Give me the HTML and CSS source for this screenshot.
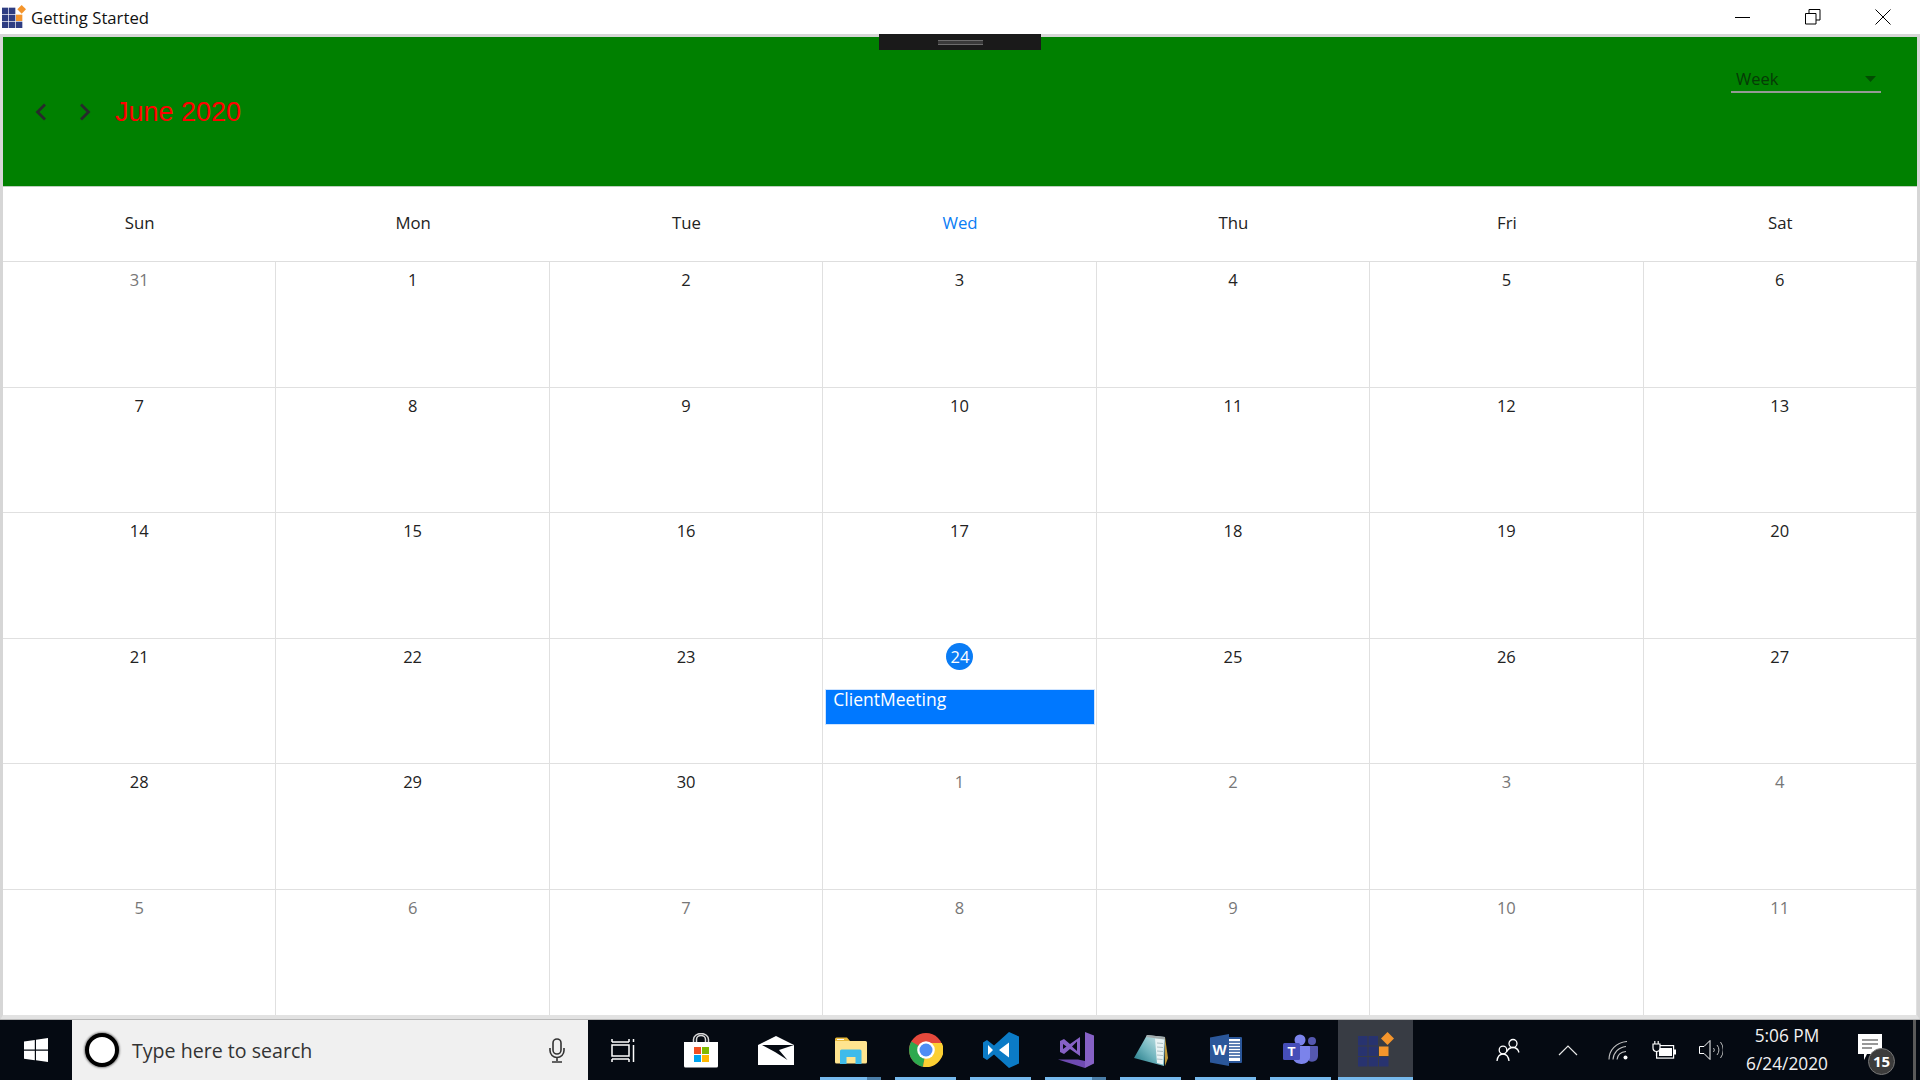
FILE: index.html
```html
<!DOCTYPE html>
<html lang="en">
<head>
<meta charset="utf-8">
<title>Getting Started</title>
<link rel="stylesheet" href="styles.css">
</head>
<body>
<svg class="defs" width="0" height="0" aria-hidden="true">
  <defs>
    <linearGradient id="padgrad" x1="0" y1="1" x2="1" y2="0">
      <stop offset="0" stop-color="#17707f"/>
      <stop offset="0.45" stop-color="#6fb4bd"/>
      <stop offset="1" stop-color="#d9eef0"/>
    </linearGradient>
  </defs>
  <symbol id="appicon" viewBox="0 0 36 36">
    <g fill="currentColor">
      <rect x="0" y="4" width="9.5" height="9.5"/><rect x="10.5" y="4" width="9.5" height="9.5"/>
      <rect x="0" y="14.5" width="9.5" height="9.5"/><rect x="10.5" y="14.5" width="9.5" height="9.5"/>
      <rect x="0" y="25" width="9.5" height="9.5"/><rect x="10.5" y="25" width="9.5" height="9.5"/><rect x="21" y="25" width="9.5" height="9.5"/>
    </g>
    <rect x="21" y="14.5" width="9.5" height="9.5" fill="#f4952c"/>
    <path d="M29.5 0l6.5 6.5-6.5 6.5-6.5-6.5z" fill="#f4952c"/>
  </symbol>
</svg>
<div class="screen">
  <header class="titlebar">
    <svg class="title-icon"><use href="#appicon"/></svg>
    <span class="title-text">Getting Started</span>
    <div class="winbtns">
      <div class="winbtn"><svg width="16" height="16" viewBox="0 0 16 16"><path d="M0 8.500h15" stroke="#000" fill="none"/></svg></div>
      <div class="winbtn"><svg width="16" height="16" viewBox="0 0 16 16"><path d="M.5 4.500h10.500v10.500H.5zM4 4.500V.5h11v10.500h-4" stroke="#000" fill="none"/></svg></div>
      <div class="winbtn"><svg width="16" height="16" viewBox="0 0 16 16"><path d="M.5.5l15 15M15.500.5l-15 15" stroke="#000" fill="none"/></svg></div>
    </div>
  </header>

  <main class="window">
    <div class="grip"><span class="grip-lines"></span></div>
    <section class="cal-head">
      <svg class="nav" width="12" height="18" viewBox="0 0 12 18"><path d="M10 1.500L2.500 9l7.500 7.500" fill="none" stroke="#262b2b" stroke-width="2.800"/></svg>
      <svg class="nav nav-next" width="12" height="18" viewBox="0 0 12 18"><path d="M2 1.500L9.500 9 2 16.500" fill="none" stroke="#262b2b" stroke-width="2.800"/></svg>
      <h1 class="month">June 2020</h1>
      <div class="view-select">
        <span class="view-label">Week</span>
        <svg width="11" height="6" viewBox="0 0 11 6"><path d="M0 0h11L5.500 6z" fill="#024d02"/></svg>
      </div>
    </section>

    <div class="dow">
      <div>Sun</div><div>Mon</div><div>Tue</div><div class="dow-today">Wed</div><div>Thu</div><div>Fri</div><div>Sat</div>
    </div>

    <div class="month-grid">
      <div class="cell muted"><span class="num">31</span></div><div class="cell"><span class="num">1</span></div><div class="cell"><span class="num">2</span></div><div class="cell"><span class="num">3</span></div><div class="cell"><span class="num">4</span></div><div class="cell"><span class="num">5</span></div><div class="cell"><span class="num">6</span></div>
      <div class="cell"><span class="num">7</span></div><div class="cell"><span class="num">8</span></div><div class="cell"><span class="num">9</span></div><div class="cell"><span class="num">10</span></div><div class="cell"><span class="num">11</span></div><div class="cell"><span class="num">12</span></div><div class="cell"><span class="num">13</span></div>
      <div class="cell"><span class="num">14</span></div><div class="cell"><span class="num">15</span></div><div class="cell"><span class="num">16</span></div><div class="cell"><span class="num">17</span></div><div class="cell"><span class="num">18</span></div><div class="cell"><span class="num">19</span></div><div class="cell"><span class="num">20</span></div>
      <div class="cell"><span class="num">21</span></div><div class="cell"><span class="num">22</span></div><div class="cell"><span class="num">23</span></div><div class="cell"><span class="num today">24</span><div class="event">ClientMeeting</div></div><div class="cell"><span class="num">25</span></div><div class="cell"><span class="num">26</span></div><div class="cell"><span class="num">27</span></div>
      <div class="cell"><span class="num">28</span></div><div class="cell"><span class="num">29</span></div><div class="cell"><span class="num">30</span></div><div class="cell muted"><span class="num">1</span></div><div class="cell muted"><span class="num">2</span></div><div class="cell muted"><span class="num">3</span></div><div class="cell muted"><span class="num">4</span></div>
      <div class="cell muted"><span class="num">5</span></div><div class="cell muted"><span class="num">6</span></div><div class="cell muted"><span class="num">7</span></div><div class="cell muted"><span class="num">8</span></div><div class="cell muted"><span class="num">9</span></div><div class="cell muted"><span class="num">10</span></div><div class="cell muted"><span class="num">11</span></div>
    </div>
  </main>

  <footer class="taskbar">
    <div class="start">
      <svg width="24" height="24" viewBox="0 0 24 24"><path d="M0 3.400l10.800-1.500v9.600H0zM12 1.700L24 0v11.500H12zM0 12.700h10.800v9.500L0 20.700zM12 12.700h12V24l-12-1.700z" fill="#fff"/></svg>
    </div>
    <div class="search">
      <span class="cortana"></span>
      <span class="search-text">Type here to search</span>
      <svg class="mic" width="18" height="25" viewBox="0 0 18 25"><rect x="5" y="1" width="8" height="15" rx="4" fill="none" stroke="#333" stroke-width="1.600"/><path d="M2 10v2.500a7 7 0 0 0 14 0V10M9 19.500v3.500M4 24h10" fill="none" stroke="#333" stroke-width="1.600"/></svg>
    </div>
    <div class="slots">
      <div class="slot slot-tasks">
        <svg width="24" height="24" viewBox="0 0 24 24"><rect x="1" y="7" width="17" height="11" fill="none" stroke="#fff" stroke-width="1.500"/><path d="M1 4h17M1 1v3M18 1v3M1 21h17M1 21v3M18 21v3M22.500 1v3M22.500 7v17" fill="none" stroke="#fff" stroke-width="1.500"/></svg>
      </div>
      <div class="slot">
        <svg width="36" height="35" viewBox="0 0 36 35"><path d="M10.500 9V6.500a7.500 6 0 0 1 15 0V9M13.500 9V6.500a4.500 4 0 0 1 9 0V9" fill="none" stroke="#d8d8d8" stroke-width="1.500"/><path d="M1 9h34v24a1.500 1.500 0 0 1-1.500 1.500h-31A1.500 1.500 0 0 1 1 33z" fill="#fff"/><rect x="11" y="14" width="7" height="7" fill="#f25022"/><rect x="19" y="14" width="7" height="7" fill="#7fba00"/><rect x="11" y="22" width="7" height="7" fill="#00a4ef"/><rect x="19" y="22" width="7" height="7" fill="#ffb900"/></svg>
      </div>
      <div class="slot">
        <svg width="36" height="29" viewBox="0 0 36 29"><path d="M0 9L18 0l18 9v20H0z" fill="#fff"/><path d="M4 9h32L21 14l8.500 10L17 16z" fill="#050a12"/></svg>
      </div>
      <div class="slot running split">
        <svg width="32" height="27" viewBox="0 0 32 27"><path d="M0 2a1.500 1.500 0 0 1 1.500-1.500H12l3 3.500H0z" fill="#e9b93b"/><path d="M0 4h30.500a1.500 1.500 0 0 1 1.500 1.500V25a1.500 1.500 0 0 1-1.500 1.500H1.500A1.500 1.500 0 0 1 0 25z" fill="#ffe48f"/><path d="M5 27v-13a1.500 1.500 0 0 1 1.500-1.500H25a1.500 1.500 0 0 1 1.500 1.500v13h-6v-7h-9v7z" fill="#3fbbea"/><path d="M2 2.500h7" stroke="#fff" stroke-width="1"/></svg>
      </div>
      <div class="slot running">
        <svg width="34" height="34" viewBox="0 0 34 34"><circle cx="17" cy="17" r="17" fill="#e5493c"/><path d="M17 17L2.300 8.500A17 17 0 0 0 14 33.700z" fill="#2da94f"/><path d="M17 10h15.800A17 17 0 0 1 14 33.700L17 17z" fill="#fcd033"/><circle cx="17" cy="17" r="8.800" fill="#fff"/><circle cx="17" cy="17" r="6.500" fill="#4f8df5"/></svg>
      </div>
      <div class="slot running">
        <svg width="36" height="36" viewBox="0 0 36 36"><path d="M26 0l10 4.500v27L26 36 11 22.500 4 28l-4-2.500v-15L4 8l7 5.500z" fill="#0b7bc6"/><path d="M26 10.500L16 18l10 7.500zM5 13v10l5-5z" fill="#fff"/></svg>
      </div>
      <div class="slot running split">
        <svg width="36" height="36" viewBox="0 0 36 36"><path d="M27 0l9 3.500v28L27 36z" fill="#8661c5"/><path d="M0 27.500h20l7 1.500v7z" fill="#6f4bb2"/><path d="M2 9l4-2 6 5 10-7v19l-10-7-6 5-4-2zM5 12v5l3.500-2.500zM19 9.500l-5 5 5 4.500z" fill="#8661c5" fill-rule="evenodd"/></svg>
      </div>
      <div class="slot running">
        <svg width="34" height="32" viewBox="0 0 34 32"><path d="M31 3l3 21-3 8z" fill="#c19a3a"/><path d="M0 24L13 1l18 2-1 29z" fill="url(#padgrad)"/><path d="M21 4.500l9 1-1 25-6-1.500z" fill="#e9f3f4"/><path d="M23 9l6 .5M23 13l6 .5M23 17l6 .5M23 21l6 .5M23 25l5.500.5" stroke="#9db4b8" stroke-width=".8"/><path d="M13 1l18 2v2.500L12 3z" fill="#a3abac"/></svg>
      </div>
      <div class="slot running">
        <svg width="32" height="32" viewBox="0 0 32 32"><rect x="14" y="3" width="18" height="26" rx="1" fill="#2b579a"/><rect x="19" y="5" width="11" height="22" fill="#fff"/><path d="M19 8h11M19 11h11M19 14h11M19 17h11M19 20h11M19 23h11" stroke="#2b579a" stroke-width="1.300"/><path d="M19 0v32L0 28.500v-25z" fill="#2b579a"/><text x="9.500" y="21" class="word-w">W</text></svg>
      </div>
      <div class="slot running">
        <svg width="35" height="32" viewBox="0 0 35 32"><circle cx="17" cy="6" r="5.500" fill="#7b83eb"/><circle cx="29" cy="7" r="4" fill="#5558af"/><path d="M24 12h10a1 1 0 0 1 1 1v9a6 6 0 0 1-9 5z" fill="#5558af"/><path d="M10 12h16a1 1 0 0 1 1 1v11a9 8 0 0 1-17 1z" fill="#7b83eb"/><rect x="0" y="9" width="17" height="17" rx="1.500" fill="#464eb8"/><text x="8.500" y="22" class="teams-t">T</text></svg>
      </div>
      <div class="slot running active">
        <svg class="app-big"><use href="#appicon"/></svg>
      </div>
    </div>
    <div class="tray">
      <div class="tray-item people">
        <svg width="24" height="24" viewBox="0 0 24 24"><circle cx="17" cy="5.500" r="4" fill="none" stroke="#fff" stroke-width="1.300"/><path d="M11 13.500c1-2.500 2.800-4 6-4s5 1.500 6 5" fill="none" stroke="#fff" stroke-width="1.300"/><circle cx="7" cy="12" r="3.800" fill="none" stroke="#fff" stroke-width="1.300"/><path d="M1 23c.5-4 2.500-7 6-7s5.500 3 6 7" fill="none" stroke="#fff" stroke-width="1.300"/></svg>
      </div>
      <div class="tray-item chev">
        <svg width="20" height="11" viewBox="0 0 20 11"><path d="M1 10l9-9 9 9" fill="none" stroke="#e8e8e8" stroke-width="1.200"/></svg>
      </div>
      <div class="tray-item wifi">
        <svg width="20" height="19" viewBox="0 0 20 19"><path d="M1 18.500C1 9 8 1.500 19 .5M5 18.500C5.500 12 10 6.500 18 5.500M9 18.500c.5-4 3.500-7.500 9-8" fill="none" stroke="#c4c4c4" stroke-width="1.100"/><circle cx="17.500" cy="16.500" r="2" fill="#fff"/></svg>
      </div>
      <div class="tray-item batt">
        <svg width="24" height="18" viewBox="0 0 24 18"><rect x="4.600" y="4.600" width="17" height="12.500" fill="#050a12" stroke="#fff" stroke-width="1.200"/><rect x="7" y="7" width="13" height="8" fill="#fff"/><rect x="22" y="8.500" width="2" height="5" fill="#fff"/><path d="M1 3h7v4a3.500 3.500 0 0 1-7 0z" fill="#050a12" stroke="#fff" stroke-width="1.200"/><path d="M2.800 0v3M6.200 0v3M4.500 10.500V15" stroke="#fff" stroke-width="1.200"/></svg>
      </div>
      <div class="tray-item vol">
        <svg width="24" height="20" viewBox="0 0 24 20"><path d="M.5 6.500h4.500L11 .5v19l-6-6H.5z" fill="none" stroke="#fff" stroke-width="1"/><path d="M14.500 8a3 3 0 0 1 0 4M18 5a7.500 7.500 0 0 1 0 10M21.500 2a13 13 0 0 1 0 16" fill="none" stroke="#bdbdbd" stroke-width="1"/></svg>
      </div>
      <div class="clock"><span>5:06 PM</span><span>6/24/2020</span></div>
      <div class="tray-item notif">
        <svg width="24" height="27" viewBox="0 0 24 27"><path d="M0 0h24v20H9l-3 6v-6H0z" fill="#fff"/><path d="M4 6h16M4 10h16M4 14h10" stroke="#333" stroke-width="1.200"/></svg>
        <span class="badge">15</span>
      </div>
      <div class="show-desktop"></div>
    </div>
  </footer>
</div>
</body>
</html>
```

FILE: styles.css
```css
* { box-sizing: border-box; }
html, body { margin: 0; height: 100%; }
body { font-family: "Open Sans", "Noto Sans", sans-serif; background: #fff; color: #222; overflow: hidden; }
.defs { display: block; width: 0; height: 0; }
.screen { width: 1920px; height: 1080px; display: flex; flex-direction: column; }

.titlebar { height: 34px; flex: none; display: flex; align-items: center; padding-left: 2px; background: #fff; }
.title-icon { width: 24px; height: 24px; color: #2e3d82; flex: none; }
.title-text { margin-left: 5px; font-size: 16.700px; color: #111; }
.winbtns { margin-left: auto; display: flex; padding-right: 2px; }
.winbtn { width: 70px; height: 34px; display: flex; align-items: center; justify-content: center; }

.window { flex: 1; min-height: 0; position: relative; display: flex; flex-direction: column; border: 3px solid #d6d6d6; border-bottom-width: 5px; border-bottom-color: #e2e2e2; }
.grip { position: absolute; z-index: 2; left: 876px; top: -3px; width: 162px; height: 16px; background: #1a1a1a; display: flex; align-items: center; justify-content: center; }
.grip-lines { width: 45px; height: 5px; border-top: 1px solid #6c6c6c; border-bottom: 1px solid #6c6c6c; background: #3a3a3a; background-clip: content-box; }

.cal-head { height: 150px; flex: none; background: #008000; display: flex; align-items: center; padding-left: 32px; border-bottom: 1px solid #bcd0bc; position: relative; }
.nav { flex: none; }
.nav-next { margin-left: 32px; }
.month { margin: 2px 0 0 24px; font: 400 27px "Liberation Sans", Arial, sans-serif; color: #f00; }
.view-select { position: absolute; right: 36px; top: 23px; width: 150px; height: 33px; display: flex; align-items: center; justify-content: space-between; padding: 6px 5px 0 5px; border-bottom: 2px solid #949a94; }
.view-label { font-size: 16.500px; color: #063a06; }

.dow { height: 75px; flex: none; display: grid; grid-template-columns: repeat(7, 1fr); align-items: center; text-align: center; font-size: 16.800px; border-bottom: 1px solid #dedede; padding-bottom: 4px; }
.dow-today { color: #0a7df5; }

.month-grid { flex: 1; min-height: 0; display: grid; grid-template-columns: repeat(7, 1fr); grid-template-rows: repeat(6, 1fr); }
.cell { border-right: 1px solid #e0e0e0; border-bottom: 1px solid #e0e0e0; display: flex; flex-direction: column; align-items: center; padding: 4px 1px 0 2px; }
.cell:nth-last-child(-n+7) { border-bottom: 0; }
.num { font-size: 16.500px; line-height: 27px; width: 27px; height: 27px; margin-right: 1px; text-align: center; border-radius: 50%; }
.muted .num { color: #777; }
.today { background: #0a7cf5; color: #fff; margin-right: 0; }
.event { align-self: stretch; height: 36px; margin-top: 19px; padding-left: 7px; font-size: 17.500px; line-height: 19px; color: #fff; background: #0078ff; border: 1px solid #cfe4ff; }

.taskbar { height: 60px; flex: none; display: flex; background: #050a12; color: #fff; box-shadow: 0 -1px 0 #b8b8b8; position: relative; }
.start { width: 72px; flex: none; display: flex; align-items: center; justify-content: center; }
.search { width: 516px; flex: none; background: #f0f0f0; display: flex; align-items: center; padding-left: 13px; }
.cortana { width: 34px; height: 34px; flex: none; border-radius: 50%; border: 4px solid #000; box-shadow: 0 0 2px 1px #8a8a8a; background: #fff; }
.search-text { margin-left: 13px; font-size: 19.600px; color: #333; }
.mic { margin-left: auto; margin-right: 22px; }
.slots { display: flex; }
.slot { width: 75px; height: 60px; flex: none; display: flex; align-items: center; justify-content: center; position: relative; }
.slot-tasks { padding-right: 5px; }
.running::after { content: ""; position: absolute; left: 7px; right: 7px; bottom: 0; height: 3px; background: #76b9ed; }
.split::before { content: ""; position: absolute; left: 54px; right: 7px; bottom: 0; height: 3px; background: #4b7ea8; z-index: 1; }
.active { background: #383c44; }
.active::after { left: 0; right: 0; }
.app-big { width: 36px; height: 36px; color: #28336f; }
.word-w { font: 700 15px "Liberation Sans", sans-serif; fill: #fff; text-anchor: middle; }
.teams-t { font: 700 13px "Liberation Sans", sans-serif; fill: #fff; text-anchor: middle; }

.tray { margin-left: auto; display: flex; align-items: center; height: 60px; }
.tray-item { display: flex; align-items: center; justify-content: center; height: 60px; position: relative; flex: none; }
.people { width: 66px; }
.chev { width: 54px; }
.wifi { width: 45px; }
.batt { width: 48px; }
.vol { width: 46px; }
.clock { width: 106px; display: flex; flex-direction: column; align-items: center; font-size: 17.300px; line-height: 28px; color: #f2f2f2; }
.notif { width: 64px; }
.notif svg { margin-top: -6px; margin-left: -4px; }
.badge { position: absolute; left: 28px; top: 28px; width: 27px; height: 27px; border-radius: 50%; background: #3c3c3c; border: 1px solid #777; color: #fff; font-size: 15px; font-weight: 700; line-height: 25px; text-align: center; }
.show-desktop { width: 16px; height: 60px; flex: none; background: linear-gradient(to right, transparent 9px, #5a5a5a 9px, #5a5a5a 12px, transparent 12px); }
```
